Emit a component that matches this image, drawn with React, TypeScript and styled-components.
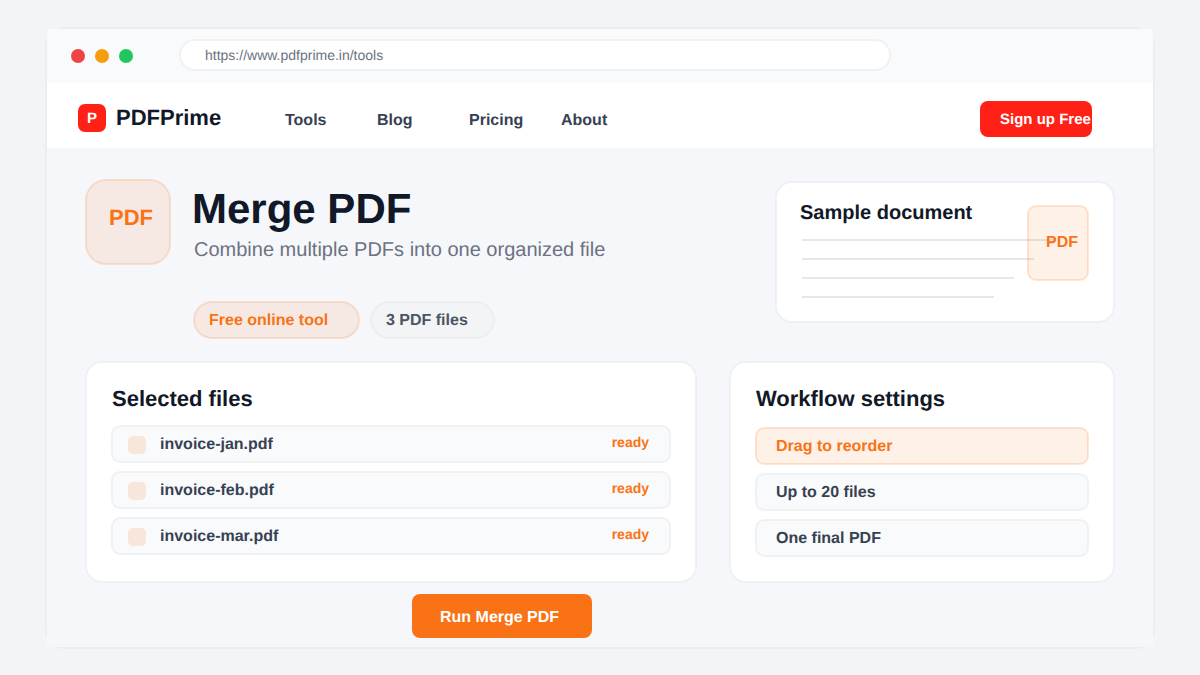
import React from "react";
import styled, { createGlobalStyle, css } from "styled-components";

const orange = "#f97316";
const line = "rgba(229, 231, 235, 0.55)";
const orangeLine = "rgba(249, 115, 22, 0.18)";
const orangeTint = "rgba(249, 115, 22, 0.1)";

const GlobalStyle = createGlobalStyle`
  *, *::before, *::after { box-sizing: border-box; }
  body {
    margin: 0;
    background: #f3f4f6;
    font-family: "Liberation Sans", Arial, sans-serif;
    color: #111827;
    text-rendering: geometricPrecision;
  }
  h1, h2, p { margin: 0; }
  button { font-family: inherit; border: 0; text-align: left; text-rendering: inherit; }
`;

/* Soft hairline: one pixel outside the fill and one inside it. */
const outline = (color: string) => css`
  border: 1px solid ${color};
  box-shadow: inset 0 0 0 1px ${color};
  background-clip: padding-box;
`;

const Page = styled.div`
  height: 675px;
  padding: 27px 45px 26px;
  overflow: hidden;
`;

const Frame = styled.div`
  width: 1110px;
  height: 622px;
  padding: 1px;
  border-radius: 19px;
  ${outline(line)}
`;

const TitleBar = styled.div`
  display: flex;
  align-items: flex-start;
  height: 54px;
  padding: 10px 0 0 24px;
  background: #f9fafc;
`;

const Dots = styled.div`
  display: flex;
  gap: 10px;
  padding-top: 10px;
  width: 108px;
`;

const Dot = styled.span<{ $color: string }>`
  width: 14px;
  height: 14px;
  border-radius: 50%;
  background: ${(p) => p.$color};
`;

const AddressBar = styled.div`
  width: 712px;
  height: 32px;
  padding: 7px 25px;
  border-radius: 16px;
  background: #fff;
  color: #6b7280;
  font-size: 14px;
  line-height: 16px;
  ${outline(line)}
`;

const NavBar = styled.header`
  display: flex;
  align-items: flex-start;
  height: 65px;
  padding: 18px 61px 0 31px;
  background: #fff;
`;

const Brand = styled.div`
  display: flex;
  gap: 10px;
  width: 207px;
  padding-top: 3px;
  font-size: 22px;
  font-weight: 700;
  line-height: 28px;
`;

const BrandMark = styled.span`
  width: 28px;
  height: 28px;
  border-radius: 7px;
  background: #ff2116;
  color: #fff;
  font-size: 15px;
  line-height: 30px;
  text-align: center;
`;

const NavLinks = styled.nav`
  display: grid;
  grid-template-columns: repeat(4, 92px);
  padding-top: 11px;
  color: #374151;
  font-size: 16px;
  font-weight: 700;
  line-height: 18px;
`;

const SignUp = styled.button`
  width: 112px;
  height: 36px;
  margin-left: auto;
  padding: 0 0 0 20px;
  border-radius: 8px;
  background: #ff2116;
  color: #fff;
  font-size: 15px;
  font-weight: 700;
  line-height: 38px;
  white-space: nowrap;
`;

const Main = styled.main`
  height: 499px;
  padding: 31px 38px 0;
  background: #f6f7fb;
`;

const Hero = styled.section`
  display: flex;
  align-items: flex-start;
  height: 182px;
`;

const ToolIcon = styled.div`
  width: 86px;
  height: 86px;
  padding: 25px 0 0 23px;
  border-radius: 21px;
  background: ${orangeTint};
  color: ${orange};
  font-size: 22px;
  font-weight: 700;
  line-height: 26px;
  ${outline(orangeLine)}
`;

const HeroText = styled.div`
  flex: 1;
  padding: 6px 0 0 21px;
`;

const Title = styled.h1`
  font-size: 42px;
  line-height: 48px;
`;

const Subtitle = styled.p`
  padding: 5px 0 0 2px;
  color: #6b7280;
  font-size: 20px;
  line-height: 24px;
`;

const Pills = styled.div`
  display: flex;
  gap: 10px;
  padding: 39px 0 0 1px;
`;

const Pill = styled.span<{ $accent?: boolean; $width: number }>`
  width: ${(p) => p.$width}px;
  height: 38px;
  padding: 1px 0 0 15px;
  border-radius: 19px;
  background: ${(p) => (p.$accent ? orangeTint : "#f3f4f6")};
  color: ${(p) => (p.$accent ? orange : "#4b5563")};
  font-size: 16px;
  font-weight: 700;
  line-height: 36px;
  ${(p) => outline(p.$accent ? orangeLine : line)}
`;

const Card = styled.section<{ $width: number; $height: number }>`
  position: relative;
  width: ${(p) => p.$width}px;
  height: ${(p) => p.$height}px;
  padding: 24px 25px 0;
  border-radius: 17px;
  background: #fff;
  ${outline(line)}
`;

const SampleCard = styled(Card)`
  margin-top: 2px;
  padding: 19px 24px 0;
`;

const SampleTitle = styled.h2`
  font-size: 20px;
  line-height: 24px;
`;

const TextLines = styled.div`
  display: grid;
  gap: 17px;
  padding: 14px 0 0 2px;
`;

const TextLine = styled.span<{ $width: number }>`
  width: ${(p) => p.$width}px;
  height: 2px;
  background: #e5e7eb;
`;

const PdfBadge = styled.div`
  position: absolute;
  top: 23px;
  right: 25px;
  width: 62px;
  height: 76px;
  padding: 28px 0 0 18px;
  border-radius: 9px;
  background: ${orangeTint};
  color: ${orange};
  font-size: 16px;
  font-weight: 700;
  line-height: 18px;
  ${outline(orangeLine)}
`;

const Panels = styled.div`
  display: flex;
  justify-content: space-between;
`;

const PanelTitle = styled.h2`
  padding-left: 1px;
  font-size: 22px;
  line-height: 26px;
`;

const Rows = styled.div<{ $top: number }>`
  display: grid;
  gap: 8px;
  padding-top: ${(p) => p.$top}px;
`;

const Row = styled.div<{ $accent?: boolean; $indent: number }>`
  display: flex;
  align-items: flex-start;
  height: 38px;
  padding: 9px 21px 0 ${(p) => p.$indent}px;
  border-radius: 9px;
  background: ${(p) => (p.$accent ? orangeTint : "#f9fafc")};
  color: ${(p) => (p.$accent ? orange : "#374151")};
  font-size: 16px;
  font-weight: 700;
  line-height: 20px;
  ${(p) => outline(p.$accent ? orangeLine : line)}
`;

const Swatch = styled.span`
  width: 18px;
  height: 18px;
  margin: 1px 14px 0 0;
  border-radius: 5px;
  background: rgba(249, 115, 22, 0.14);
`;

const Status = styled.span`
  margin-left: auto;
  color: ${orange};
  font-size: 14px;
  line-height: 14px;
`;

const RunButton = styled.button`
  display: block;
  width: 180px;
  height: 44px;
  margin: 11px 0 0 327px;
  padding: 1px 0 0 28px;
  border-radius: 8px;
  background: ${orange};
  color: #fff;
  font-size: 16px;
  font-weight: 700;
  line-height: 46px;
`;

const links = ["Tools", "Blog", "Pricing", "About"];
const files = ["invoice-jan.pdf", "invoice-feb.pdf", "invoice-mar.pdf"];
const settings = ["Drag to reorder", "Up to 20 files", "One final PDF"];

export default function App() {
  return (
    <Page>
      <GlobalStyle />
      <Frame>
        <TitleBar>
          <Dots>
            <Dot $color="#ef4444" />
            <Dot $color="#f59e0b" />
            <Dot $color="#22c55e" />
          </Dots>
          <AddressBar>https://www.pdfprime.in/tools</AddressBar>
        </TitleBar>
        <NavBar>
          <Brand>
            <BrandMark>P</BrandMark>
            PDFPrime
          </Brand>
          <NavLinks>
            {links.map((l) => (
              <span key={l}>{l}</span>
            ))}
          </NavLinks>
          <SignUp>Sign up Free</SignUp>
        </NavBar>
        <Main>
          <Hero>
            <ToolIcon>PDF</ToolIcon>
            <HeroText>
              <Title>Merge PDF</Title>
              <Subtitle>Combine multiple PDFs into one organized file</Subtitle>
              <Pills>
                <Pill $accent $width={167}>Free online tool</Pill>
                <Pill $width={125}>3 PDF files</Pill>
              </Pills>
            </HeroText>
            <SampleCard $width={340} $height={142}>
              <SampleTitle>Sample document</SampleTitle>
              <TextLines>
                {[252, 232, 212, 192].map((w) => (
                  <TextLine key={w} $width={w} />
                ))}
              </TextLines>
              <PdfBadge>PDF</PdfBadge>
            </SampleCard>
          </Hero>
          <Panels>
            <Card $width={612} $height={222}>
              <PanelTitle>Selected files</PanelTitle>
              <Rows $top={13}>
                {files.map((f) => (
                  <Row key={f} $indent={16}>
                    <Swatch />
                    {f}
                    <Status>ready</Status>
                  </Row>
                ))}
              </Rows>
            </Card>
            <Card $width={386} $height={222}>
              <PanelTitle>Workflow settings</PanelTitle>
              <Rows $top={15}>
                {settings.map((s, i) => (
                  <Row key={s} $accent={i === 0} $indent={20}>
                    {s}
                  </Row>
                ))}
              </Rows>
            </Card>
          </Panels>
          <RunButton>Run Merge PDF</RunButton>
        </Main>
      </Frame>
    </Page>
  );
}
